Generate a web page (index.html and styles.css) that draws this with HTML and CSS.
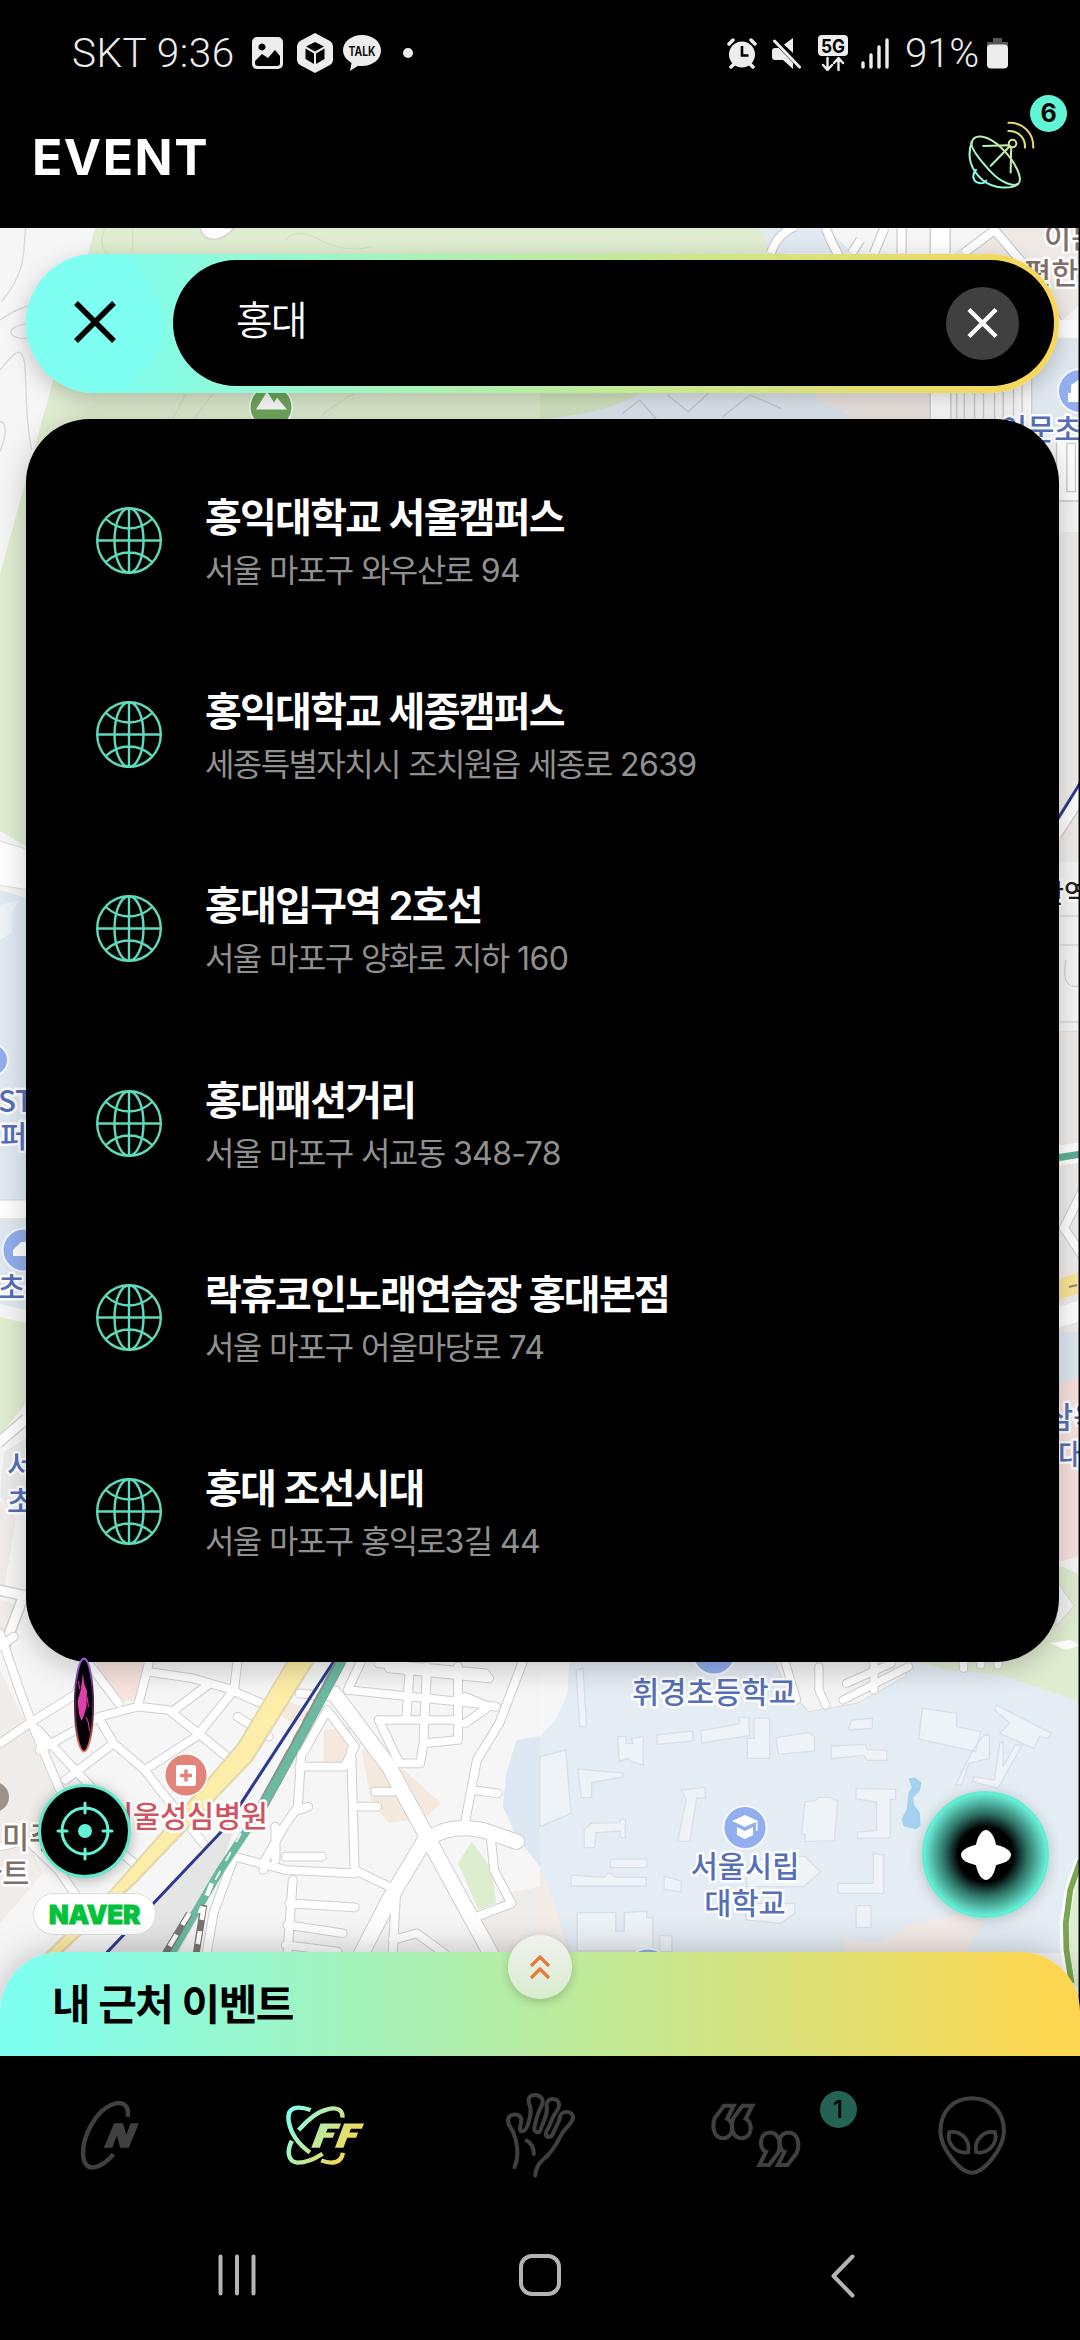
FILE: index.html
```html
<!DOCTYPE html>
<html lang="ko">
<head>
<meta charset="utf-8">
<title>EVENT</title>
<link rel="stylesheet" href="styles.css">
</head>
<body>
<div class="phone">
  <div class="status">
    <div class="status-side">
      <span class="status-time">SKT 9:36</span>
      <svg class="ic-image" viewBox="0 0 31 32"><path fill="#ededed" fill-rule="evenodd" d="M5 0h21a5 5 0 0 1 5 5v22a5 5 0 0 1-5 5H5a5 5 0 0 1-5-5V5a5 5 0 0 1 5-5zM3 24v2a3 3 0 0 0 3 3h19a3 3 0 0 0 3-3v-7l-5-6-7 8-6-4zM10 6.500a3.500 3.500 0 1 0 .01 0z"/></svg>
      <svg class="ic-cube" viewBox="0 0 36 40"><path fill="#ededed" d="M18 0l15 8q3 2 3 5v14q0 3-3 5l-15 8-15-8q-3-2-3-5V13q0-3 3-5z"/><path fill="#000" d="M18 9l9 4.500-9 5-9-5zM8.500 15.500l8.500 5V31l-8.500-5zM27.500 15.500l-8.500 5V31l8.500-5z"/></svg>
      <svg class="ic-talk" viewBox="0 0 38 36"><path fill="#ededed" d="M19 0C30 0 38 7 38 15.500S30 31 19 31q-3 0-4-.3L7 36l1.500-8Q0 23 0 15.500C0 7 8 0 19 0z"/><text x="19" y="20.500" text-anchor="middle" font-size="12.500" font-weight="700" fill="#111" font-family="Inter,sans-serif" textLength="27" lengthAdjust="spacingAndGlyphs">TALK</text></svg>
      <i class="status-dot"></i>
    </div>
    <div class="status-side status-right">
      <svg class="ic-alarm" viewBox="0 0 30 31"><circle cx="15" cy="16.500" r="13" fill="#ededed"/><path stroke="#ededed" stroke-width="3.500" stroke-linecap="round" d="M2 6l4-4M28 6l-4-4M4 29l4-4M26 29l-4-4"/><path fill="none" stroke="#000" stroke-width="2.600" d="M15 8v9.500h6.500"/></svg>
      <svg class="ic-mute" viewBox="0 0 29 31"><path fill="#ededed" d="M21 0v15L12 6.500zM0 13q0-3 3-3h4l14 13.500V31l-10-9H3q-3 0-3-3z"/><path stroke="#000" stroke-width="6" d="M5 4l24 25"/><path stroke="#ededed" stroke-width="3" stroke-linecap="round" d="M2.500 3L27.500 29"/></svg>
      <svg class="ic-5g" viewBox="0 0 30 36"><rect width="30" height="21" rx="4" fill="#ededed"/><text x="15" y="17.500" text-anchor="middle" font-size="19" font-weight="700" fill="#000" font-family="Inter,sans-serif" textLength="24" lengthAdjust="spacingAndGlyphs">5G</text><path fill="none" stroke="#ededed" stroke-width="2.400" stroke-linecap="round" stroke-linejoin="round" d="M9.500 23v11M5 30l4.500 5 4.500-5M20.500 35V24M16 28l4.500-5 4.500 5"/></svg>
      <svg class="ic-signal" viewBox="0 0 28 31"><path stroke="#ededed" stroke-width="3.400" stroke-linecap="round" d="M2 25v4M10 17v12M18 9v20M26 2v27"/></svg>
      <span class="status-pct">91%</span>
      <svg class="ic-battery" viewBox="0 0 21 31"><path fill="#555" d="M6 0h9v4h6v5H0V4h6z"/><rect y="6.500" width="21" height="24" rx="4" fill="#ededed"/></svg>
    </div>
  </div>

  <header class="header">
    <h1>EVENT</h1>
    <div class="dish">
      <svg viewBox="1240 360 200 205" preserveAspectRatio="none">
        <defs><linearGradient id="dishG" gradientUnits="userSpaceOnUse" x1="1250" y1="540" x2="1430" y2="370"><stop offset="0" stop-color="#7ffff0"/><stop offset=".55" stop-color="#c4eaa4"/><stop offset="1" stop-color="#f9d050"/></linearGradient></defs>
        <g fill="none" stroke="url(#dishG)" stroke-width="6" stroke-linecap="round">
          <path d="M1254 425C1262 400 1300 404 1340 443S1404 536 1388 550C1376 558 1340 548 1310 515S1247 440 1254 425z"/>
          <path d="M1254 425C1238 470 1252 510 1285 538S1370 566 1388 550"/>
          <path d="M1266 508c-14 18-8 38 12 40q14 0 18-8"/>
          <circle cx="1372" cy="430" r="11"/>
          <path d="M1361 435l-74 2.500M1364 438l-55 58M1368 442l-1.500 74M1360 393c28-2 50 20 48 49M1360 368c42-2 74 32 72 74"/>
        </g>
      </svg>
      <b class="badge badge-top">6</b>
    </div>
  </header>

  <main class="stage">
    <svg class="map" viewBox="0 228 1080 1828" preserveAspectRatio="none">
      <rect y="228" width="1080" height="1828" fill="#f6f6f6"/>
      <!-- hills and top strip -->
      <path fill="#dfedd0" d="M95 228h665l30 30v130l-180 20-80 40H220L26 480v366l-26-15V574l34-124z"/>
      <g transform="translate(0 220) scale(.34435 .33333)" fill="none" stroke="#d8d8d8" stroke-width="4">
        <path d="M75 24c-10 60 10 120-70 220M0 300q50-35 90-45M85 310c-80 10-60 50-5 45M0 450c40-50 60-80 72-20 5 60 0 160 20 260M0 605c20 0 20 40 0 90"/>
        <path stroke="#d2e2c6" d="M305 24q-20 50 5 76M385 24v76M830 60q30-40 100 0t150 20M540 520l-40 80M620 520l-60 80M930 590q60-50 100-70"/>
        <path fill="#fff" stroke="#cfcfcf" d="M580 20c10 50 60 50 100 4z"/>
      </g>
      <g transform="translate(540 220) scale(.34435 .33333)">
        <path fill="#e1eaf2" d="M640 24h190l80 76H670zM0 600l300-80h520l70 60v20z"/>
        <path fill="#d6e8c5" d="M0 520h290q-90 60-290 78z"/>
        <path fill="#efe9e5" d="M800 520h340v80H890v-25l-80-30zM1200 100l140-80h230v230l-60 60z"/>
        <path fill="#dfe7ef" d="M1430 355h140v290h-140z"/>
        <g fill="none" stroke="#c9c9c9" stroke-width="30"><path d="M670 100q20-60 70-80M830 24q20 60 60 120M905 100l25-40M970 100l30-76M1050 24v76M1230 100l90-70 90 110 100 180h60"/></g>
        <g fill="none" stroke="#fff" stroke-width="23"><path d="M670 100q20-60 70-80M830 24q20 60 60 120M905 100l25-40M970 100l30-76M1050 24v76M1230 100l90-70 90 110 100 180h60"/></g>
        <path fill="#fff" d="M1133 24h58v76h-58zM1133 520h60v80h-60zM1505 300h63v52h-63z"/>
        <path stroke="#ccc" stroke-width="4" fill="none" d="M1133 24v76M1191 24v76M1133 520v80M1193 520v80M1210 520v80M1232 520v80M1262 520v80M1288 520v80M1320 500v100M1345 500v100M1375 490v110M1400 480v120M1428 470v130M240 580l50-40 50 60M370 525l60 50 60-55M530 590l80-65 90 40"/>
        <path stroke="#ccc" stroke-width="4" fill="#fff" d="M1500 665h70v178h-70z"/><path stroke="#ccc" stroke-width="4" fill="none" d="M1530 670h25v145h-25z"/>
      </g>
      <rect x="1059" y="532" width="21" height="330" fill="#f0ece9"/>
      <g transform="translate(146 1)"><circle cx="125" cy="406" r="22" fill="#fff"/><circle cx="125" cy="406" r="20.500" fill="#72a95c"/><path fill="#fff" d="M110 408.500l11-18 7 11 3-5 10 12z"/></g>
      <!-- left edge -->
      <path fill="#fff" stroke="#ddd" d="M-4 840l34 10v40l-34-5z"/>
      <path fill="#e1eaf3" d="M0 890l26 8v304H0z"/><path fill="#eef3f7" d="M0 905l20-5-8 12v20l-12 8z"/>
      <path fill="#fff" stroke="#d5d5d5" d="M-2 1200h30v19H-2z"/>
      <path fill="#dfe8f2" d="M0 1220h26v90l-26-6z"/>
      <path fill="#dfedd0" d="M0 1317l26 6v80l-26 32z"/>
      <path fill="#ebebeb" d="M4 1452l22-14v76H8l-8-20z"/>
      <path fill="#f1ece9" d="M0 1500l16 18-12 72H0zM0 1600l14 4-10 40H0z"/>
      <path fill="none" stroke="#d0d0d0" stroke-width="12" d="M-2 1443l28-24M-2 1590l28 6M22 1600L4 1648"/><path fill="none" stroke="#fff" stroke-width="9" d="M-2 1443l28-24M-2 1590l28 6M22 1600L4 1648"/>
      <!-- right edge -->
      <path fill="none" stroke="#d0d0d0" stroke-width="15" d="M1055 834l30-46"/><path fill="none" stroke="#fff" stroke-width="12" d="M1055 834l30-46"/>
      <path stroke="#2b3a8f" stroke-width="3" d="M1056 822l26-42"/>
      <path fill="none" stroke="#ccc" d="M1060 916h20M1060 945h20M1066 960q-6 30 14 26M1059 1022h21M1059 1032h21"/>
      <path fill="#f0ece9" d="M1059 1032h21v300h-21z"/>
      <path stroke="#fff" stroke-width="20" d="M1056 1156l26-4"/><path stroke="#5fae98" stroke-width="7" d="M1056 1158l26-4"/>
      <path fill="none" stroke="#ccc" stroke-width="10" d="M1084 1188l-20 40 20 30"/><path fill="none" stroke="#fff" stroke-width="8" d="M1084 1188l-20 40 20 30"/>
      <path stroke="#fbe59a" stroke-width="20" d="M1056 1290l26-8"/><path stroke="#888" stroke-width="2" d="M1069 1287l8-2"/>
      <path stroke="#fff" stroke-width="20" d="M1056 1318l26-8"/>
      <path fill="#dfe8f2" d="M1059 1332h21v60h-21z"/><path fill="#f8e2de" d="M1059 1384l21-8v180l-21 6z"/>
      <path fill="#dfedd0" d="M1059 1565l21 10v100h-50z"/><path fill="#f3f3f3" stroke="#d5d5d5" d="M1056 1580l18 26-18 20z"/>

      <!-- south-west blocks, rail and streets -->
      <g transform="translate(0 1640) scale(.34435 .33333)">
        <path fill="#f0ece9" d="M0 90l75 160 90 220-10 90-60 80 30 60L0 850z"/>
        <path fill="#f9e4df" d="M280 60h160l-40 120-55 5-60-90z"/>
        <path fill="#f5e8dd" d="M1050 330h60l170 160-40 40-110 20-50-60zM830 180l90 40-20 60-80-50zM940 270l80-10-20 110h-60z"/>
        <path fill="#dceecd" d="M1370 605l60 85 10 100-50 20-60-140z"/>
        <path fill="#dde8f3" d="M1500 300l68-12v392l-68-90-40-90 10-100z"/>
        <path fill="#f0ece9" d="M1390 830l100-75 78-15v200h-140z"/>
        <path fill="#e5e5e5" d="M640 575l60-60-90 250-90 170H320z"/>
        <defs><g id="streets" fill="none" stroke-linejoin="round" stroke-linecap="round">
          <path d="M0-20l60 180 40 110 70 170 30 60M0 310l100-70 140-90M0 20L40-10M115 330l175-100 110-30 25-100 25-110M250 60l-30 110M250 60l95 130M400 200l90 10 110 90 70 60M290 240l40 70 90 80 60 80 50 60 60 80M190 420l140-110M110 270l180 200M430 95l130 20 100 30 110 50M690 60l-10 90-110 140-150 100M610 130L500 215M690 230l90 60M0 620l80-20 90 90 60 90M300 590l100 90"/>
          <path d="M1050 60l-40 90 370 40 60 10M1100 70l310 30 10 15-290-30M1190 80l-10 160M1240 80l-10 220M1330 80v220M1100 240h220M1100 240l60 130h60l10-60 100-10M1350 170l70 30-70 50M1520 60l-70 190-65 110-35 190M1370 450l75 10M1090 455h50M1045 500h50M1425 590l10 100 50 100-100 40"/>
          <path d="M1020 330l10 370-200-10-150-40-60 170-20 120M875 340l-10 160-40 60-60 110v20M870 380h130l30-60-80-110-70 130M870 510l25-10M800 560v100M830 650h105M850 720l-15 220M840 790l190 12M835 855l160 25M830 915l150 20M1150 760l-10 190M1030 690l100 50M1140 900l70-20 80 60M960 170l-90-10"/>
        </g>
        <g id="avenues" fill="none" stroke-linecap="round"><path d="M970 160l160 220 110 210 100 190 90 170M1240 590l-110 190-90 180M1240 600q60-50 160-30l100 35"/></g></defs>
        <use href="#streets" stroke="#cfcfcf" stroke-width="29"/><use href="#avenues" stroke="#cfcfcf" stroke-width="49"/>
        <use href="#streets" stroke="#fff" stroke-width="23"/><use href="#avenues" stroke="#fff" stroke-width="43"/>
        <path fill="#e3d9ae" d="M835 60h82L735 362 400 725 160 960h-50l210-210L550 480 690 310z"/>
        <path fill="#fceea8" d="M840 60h70L728 360 395 720 150 960h-30l204-206L556 482 696 312z"/>
        <path fill="none" stroke="#2b3a8f" stroke-width="9" d="M972 60L700 490l-60 88L310 938"/>
        <path fill="none" stroke="#86968f" stroke-width="32" d="M992 60L830 370 750 520"/>
        <path fill="none" stroke="#6cb9a2" stroke-width="24" d="M995 60L833 370 750 520 640 690 495 945"/>
        <path fill="none" stroke="#fff" stroke-width="5" stroke-dasharray="30 34" d="M935 130L820 350M700 580l-80 150"/>
        <path fill="none" stroke="#7a7672" stroke-width="20" d="M550 820l-70 120M592 795l-22 145"/><path fill="none" stroke="#fff" stroke-width="13" stroke-dasharray="40 34" d="M550 820l-70 120M592 800l-22 140M615 730l-35 90"/>
      </g>
      <!-- university campus -->
      <g transform="translate(540 1640) scale(.34435 .33333)">
        <path fill="#e4ecf4" d="M0 60h1568v880H0z"/>
        <path fill="#f7f7f7" d="M0 60h85l-5 100-35 80-45 50z"/>
        <path fill="#f3ebe6" d="M0 690l40 90 40 160H0zM880 895l100 15 100-60 140-25 65 20-50 95H880z"/>
        <path fill="#dfedd0" d="M1080 60l280 6L1480 0h88v185l-228-80-160-15z"/>
        <path fill="#f4f4f4" stroke="#ddd" stroke-width="3" d="M680 60h400l-20 50-140 80-140 25-70-80z"/>
        <path fill="none" stroke="#cfcfcf" stroke-width="27" stroke-linecap="round" d="M710 60l35 120M810 80v70l20 45M880 180l190-100M890 130l130-60M970 60v90M1230 60v25M1280 60v15M1330 60v15"/>
        <path fill="none" stroke="#fff" stroke-width="21" stroke-linecap="round" d="M710 60l35 120M810 80v70l20 45M880 180l190-100M890 130l130-60M970 60v90M1230 60v25M1280 60v15M1330 60v15"/>
        <path fill="#fff" d="M1480 10l60-10 28 15-40 15z"/>
        <g fill="#eef3f8" stroke="#d9dfe6" stroke-width="4">
          <path d="M0 350l75-20 15 190-90 40zM105 90l20-5 10 175h-20zM225 290h25v20h20l-5-15 35-5v85l-35-10-10-10-25 10zM338 285l105-12 2 30-105 10zM468 272l110-20v-20h28l3 55-140 22zM622 235h45v120h-65v-60h20zM685 293l95-15 17 10v45l-105 10zM905 240l60-5v30l-70 5zM845 318l100-5 5 15 57 3v30h-57l-10-15-95 10zM1110 205l100 15v40l70 15-15 60-165-38zM1325 195l160 85-10 15-25-5-15 35-100-45 30-30-45-40zM1290 285h15v70l-60 15-20 65h-18l50-105zM1345 305v75l35-65h20l-70 130-75-20 5-15 60 10 15-110zM110 387l130 12v12l-90 17v45h-30zM410 450l70-8v32h-25l-20 130h-35l25-125zM128 570l20-20 85-2v-10h15v55h-15v-20l-70 5-5 45h-30zM205 657h105v26H205zM90 705l95 7 15-15 20 15h88v26H90zM360 708l50 15v33l-50-8zM770 485l30-3 10-10h30l25 10-10 120-85 3v-20l-10-5zM918 445l115 3v30h-16v115l-95 3v-20l55-5v-85l-60-10zM968 640l30 5v115H865v-30h103zM918 797h43v65h-43zM108 818h112v55h25v-55l65-5v20h18v100H108zM348 887h35v48h-35zM660 650h110l45 45-50 45H600v-60zM590 790h150v30l-40 30-100-10z"/>
        </g>
        <path fill="#a3d1ef" d="M1070 415l20-2 18 15-5 25-20 20 5 25 15 20 2 40-15 10-35-10-5-20 15-30 5-50 10-15z"/>
        <path fill="#dfedd0" d="M1568 660l-40 130-5 150 20 100h25z"/>
        <path fill="none" stroke="#fff" stroke-width="28" d="M1568 660l-30 90-15 100 2 80 15 100"/><path fill="none" stroke="#7ba653" stroke-width="17" d="M1570 660l-30 90-13 100 2 80 15 100"/>
      </g>
      <!-- place markers -->
      <circle cx="186" cy="1775" r="22" fill="#fff"/><circle cx="186" cy="1775" r="20.500" fill="#e18479"/><rect x="176" y="1765" width="20" height="21" rx="2" fill="#fff"/><path stroke="#e18479" stroke-width="3.500" d="M180 1775.500h12M186 1769.500v12"/>
      <circle cx="-6" cy="1797" r="15" fill="#9b938b"/>
      <g fill="#92aeee" stroke="#f4f8fd" stroke-width="2"><circle cx="745" cy="1827.500" r="21.500"/><circle cx="714" cy="1653" r="21.500"/><circle cx="648" cy="1970" r="21.500"/><circle cx="1080" cy="391" r="22"/><circle cx="-8" cy="1060" r="16"/><circle cx="24" cy="1250" r="21.500"/></g>
      <path fill="#fff" d="M732 1821l13-6 13 6-13 6zM737 1827l8 4 8-4v8l-8 4-8-4zM756 1821h1.500v10H756zM1068 402v-9h3v-8l9-6v23zM13 1256v-6l8-8h6v14z"/>
      <g class="label label-school">
        <text x="632" y="1703" textLength="164">휘경초등학교</text><text x="745" y="1877" text-anchor="middle">서울시립</text><text x="745" y="1914" text-anchor="middle">대학교</text>
        <text x="1000" y="440">이문초</text><text x="-2" y="1112">ST</text><text x="0" y="1147">퍼</text><text x="-2" y="1298">초등</text><text x="7" y="1476">서울</text><text x="7" y="1512">초등</text><text x="1046" y="1428">삼육</text><text x="1058" y="1465">대학</text>
      </g>
      <g class="label label-place"><text x="1044" y="248">이문</text><text x="1024" y="284">편한</text><text x="2" y="1848">미주</text><text x="-25" y="1884">파트</text></g>
      <text class="label label-station" x="1040" y="903">안역</text>
      <text class="label label-hospital" x="106" y="1827" textLength="162">서울성심병원</text>
      <path stroke="#000" stroke-width="1.500" d="M1079.300 228v1828"/>
    </svg>

    <div class="search">
      <button class="close"><svg viewBox="0 0 42 42"><path d="M2 2l38 38M40 2L2 40"/></svg></button>
      <div class="field"><span>홍대</span><button class="clear"><svg viewBox="0 0 32 32"><path d="M2 2l28 28M30 2L2 30"/></svg></button></div>
    </div>

    <svg class="defs"><defs><g id="globe" fill="none" stroke="#5edabb" stroke-width="2.400"><ellipse cx="33" cy="33.500" rx="31.800" ry="32.300"/><ellipse cx="33" cy="33.500" rx="14.500" ry="32.300"/><path d="M33 1v65M1 33.500h64M10 12q10 9.500 23 9.500t23-9.500M10 55q10-9.500 23-9.500t23 9.500"/></g></defs></svg>
    <ul class="results">
      <li><svg viewBox="0 0 66 67"><use href="#globe"/></svg><div><h2>홍익대학교 서울캠퍼스</h2><p>서울 마포구 와우산로 <span>94</span></p></div></li>
      <li><svg viewBox="0 0 66 67"><use href="#globe"/></svg><div><h2>홍익대학교 세종캠퍼스</h2><p>세종특별자치시 조치원읍 세종로 <span>2639</span></p></div></li>
      <li><svg viewBox="0 0 66 67"><use href="#globe"/></svg><div><h2>홍대입구역 2호선</h2><p>서울 마포구 양화로 지하 <span>160</span></p></div></li>
      <li><svg viewBox="0 0 66 67"><use href="#globe"/></svg><div><h2>홍대패션거리</h2><p>서울 마포구 서교동 <span>348-78</span></p></div></li>
      <li><svg viewBox="0 0 66 67"><use href="#globe"/></svg><div><h2>락휴코인노래연습장 홍대본점</h2><p>서울 마포구 어울마당로 <span>74</span></p></div></li>
      <li><svg viewBox="0 0 66 67"><use href="#globe"/></svg><div><h2>홍대 조선시대</h2><p>서울 마포구 홍익로<span>3</span>길 <span>44</span></p></div></li>
    </ul>

    <svg class="coin" viewBox="0 0 20 96"><defs><linearGradient id="coinG" x2="0" y2="1"><stop offset="0" stop-color="#a568e8"/><stop offset=".4" stop-color="#3c1440"/><stop offset=".7" stop-color="#7a2c40"/><stop offset="1" stop-color="#f07a62"/></linearGradient></defs><ellipse cx="10" cy="48" rx="9" ry="46.500" fill="#040008" stroke="url(#coinG)" stroke-width="2"/><path fill="#dc3fae" d="M9 16l1 10 3 8-.5 16-3 10-2 4-2.500-7-1.500-13 3-10z"/><path fill="none" stroke="#c23a94" stroke-width="1.200" d="M5.500 32l-1-8M13 40l1.500 10M12 60l2.500 6 1 8"/></svg>
    <button class="locate"><svg viewBox="0 0 58 60"><g fill="none" stroke="#64f2d6" stroke-width="3"><circle cx="29" cy="30" r="23"/><path stroke-linecap="round" d="M29 2v10M29 48v10M2 30h9M47 30h9"/></g><circle cx="29" cy="30" r="7" fill="#64f2d6"/></svg></button>
    <div class="naver">NAVER</div>
    <button class="fab"><svg viewBox="0 0 50 50"><ellipse cx="25" cy="25" rx="11" ry="25"/><ellipse cx="25" cy="25" rx="25" ry="11"/><circle cx="25" cy="25" r="14.500"/></svg></button>

    <section class="sheet"><h3>내 근처 이벤트</h3><button class="toggle"><svg viewBox="0 0 22 26"><path d="M2 12l9-9 9 9M2 24l9-9 9 9"/></svg></button></section>
  </main>

  <nav class="tabs">
    <svg class="tab-n" viewBox="232 152 176 208" preserveAspectRatio="none"><path fill="none" stroke="#404040" stroke-width="13" d="M371 202C378 170 360 154 330 164 275 184 240 262 241 312 243 376 297 354 330 313"/><path fill="#404040" d="M302 294l30-73h26l10 34 12-34h25l-30 73h-25l-10-36-13 36z"/></svg>
    <svg class="tab-ff" viewBox="826 165 234 184" preserveAspectRatio="none"><defs><linearGradient id="ffG" gradientUnits="userSpaceOnUse" x1="830" y1="190" x2="1020" y2="310"><stop offset="0" stop-color="#7ffff0"/><stop offset=".5" stop-color="#bceaa0"/><stop offset="1" stop-color="#fbd64f"/></linearGradient></defs><g fill="none" stroke="url(#ffG)" stroke-width="13"><path d="M901 180C860 165 830 172 837 215 843 250 865 283 899 308M866 241C890 212 920 185 950 178 980 170 995 180 994 203M846 273C830 305 835 336 862 339 888 340 912 328 936 312M932 332C960 344 992 342 995 309"/></g><path fill="url(#ffG)" d="M903 294l27-73h60l-6 16h-33l-5 11h26l-6 16h-27l-11 30zM972 294l27-73h58l-6 16h-32l-5 11h26l-6 16h-26l-11 30z"/></svg>
    <svg class="tab-hand" viewBox="40 35 220 265" preserveAspectRatio="none"><path fill="none" stroke="#404040" stroke-width="12" stroke-linecap="round" stroke-linejoin="round" d="M75 261C90 225 84 190 70 155 62 140 50 128 57 112 65 98 90 100 95 115 97 130 88 140 92 150 98 158 110 150 114 136 122 112 128 90 119 72 112 50 125 43 138 44 155 45 164 58 157 75 150 88 140 115 135 140 131 156 148 162 153 150 160 125 178 100 171 75 172 50 206 50 209 72 210 90 196 95 189 115 182 135 172 148 169 160 170 174 184 174 191 160 200 138 210 125 212 108 218 88 252 92 251 112 250 130 228 140 215 165 200 195 182 222 160 240 145 252 139 265 137 287M111 181q22 12 22 41"/></svg>
    <div class="quotes"><svg viewBox="497 160 262 194" preserveAspectRatio="none"><g fill="none" stroke="#404040" stroke-width="12"><path id="q" d="M535 168h28l-19 39c20 8 22 55-10 58-30 0-35-35-26-60z"/><use href="#q" x="54"/><g transform="rotate(180 627.500 256.500)"><use href="#q"/><use href="#q" x="54"/></g></g></svg><b class="badge badge-tab">1</b></div>
    <svg class="tab-alien" viewBox="1152 136 204 242" preserveAspectRatio="none"><g fill="none" stroke="#404040" stroke-width="12"><path d="M1254 146c58 0 93 42 93 98 0 50-58 124-93 124s-92-74-92-124c0-56 34-98 92-98z"/><path stroke-width="11" d="M1188 247c30-6 62 20 55 60-34 6-64-24-55-60zM1321 247c-30-6-62 20-55 60 34 6 64-24 55-60z"/></g></svg>
  </nav>
  <div class="sysnav">
    <svg width="40" height="42" viewBox="0 0 40 42"><path d="M3.500 2.500v37M20 2.500v37M36.500 2.500v37"/></svg>
    <svg class="home" width="42" height="42" viewBox="0 0 42 42"><rect x="2" y="2" width="38" height="38" rx="11"/></svg>
    <svg width="24" height="44" viewBox="0 0 24 44"><path d="M21.500 2.500L2.500 22l19 19.500"/></svg>
  </div>
</div>
</body>
</html>
```
FILE: styles.css
```css
* { box-sizing: border-box; }
body { margin: 0; background: #000; font-family: Inter, "Noto Sans CJK KR", sans-serif; }
h1, h2, h3, p, ul { margin: 0; padding: 0; list-style: none; }
button { border: 0; padding: 0; background: none; display: flex; align-items: center; justify-content: center; }
svg { display: block; flex: none; }
.phone { width: 1080px; height: 2340px; display: flex; flex-direction: column; overflow: hidden; background: #000; }

.status { height: 106px; display: flex; justify-content: space-between; align-items: center; padding: 0 72px 0 72px; color: #ededed; font-family: Roboto, sans-serif; }
.status-side { display: flex; align-items: center; }
.status-time { width: 180px; font-size: 40.500px; font-weight: 350; letter-spacing: .5px; white-space: nowrap; }
.ic-image { width: 31px; height: 32px; margin-right: 14px; }
.ic-cube { width: 36px; height: 40px; margin-right: 10px; }
.ic-talk { width: 38px; height: 36px; margin-right: 22px; }
.status-dot { width: 10px; height: 10px; border-radius: 50%; background: #ededed; }
.ic-alarm { width: 30px; height: 31px; margin-right: 15px; }
.ic-mute { width: 29px; height: 31px; margin-right: 17px; }
.ic-5g { width: 30px; height: 36px; margin-right: 13px; }
.ic-signal { width: 28px; height: 31px; margin-right: 16px; }
.status-pct { width: 82px; font-size: 40.500px; font-weight: 350; letter-spacing: -.3px; }
.ic-battery { width: 21px; height: 31px; }

.header { height: 122px; padding: 0 44px 22px 32px; display: flex; align-items: center; justify-content: space-between; }
.header h1 { color: #fff; font-size: 50px; font-weight: 650; letter-spacing: 1.500px; line-height: 60px; padding-top: 2px; }
.dish { position: relative; width: 69px; height: 69px; margin-top: -4px; }
.dish svg { width: 69px; height: 69px; }
.badge { position: absolute; width: 37px; height: 37px; border-radius: 50%; display: flex; align-items: center; justify-content: center; font-weight: 700; font-size: 25px; color: #000; }
.badge-top { left: 63px; top: -25px; background: #5ff5d5; }

.stage { position: relative; height: 1828px; padding: 26px 21px 0 26px; overflow: hidden; display: flex; flex-direction: column; }
.map { position: absolute; left: 0; top: 0; width: 1080px; height: 1828px; }
.label { font-family: "Noto Sans CJK KR", sans-serif; font-size: 29.500px; font-weight: 500; paint-order: stroke; stroke: #fff; stroke-width: 5px; stroke-linejoin: round; }
.label-school { fill: #5570b8; }
.label-place { fill: #7f7168; }
.label-station { fill: #222; font-size: 26px; }
.label-hospital { fill: #d0535f; }
.defs { position: absolute; width: 0; height: 0; }

.search { position: relative; height: 139px; flex: none; border-radius: 70px; display: flex; align-items: center; padding-right: 5px; background: linear-gradient(90deg, #7ffff0 8%, #b9eca0 50%, #fad655 100%); box-shadow: 0 6px 22px rgba(0,0,0,.22); }
.close { width: 137px; height: 139px; border-radius: 50%; background: #7ffff2; margin-right: 10px; padding-bottom: 3px; }
.close svg { width: 42px; height: 44px; fill: none; stroke: #000; stroke-width: 5.500; }
.field { flex: 1; height: 126px; border-radius: 63px; background: #000; color: #fff; display: flex; align-items: center; justify-content: space-between; padding: 0 35px 0 63px; margin-top: -1px; }
.field span { font-size: 40px; font-weight: 350; letter-spacing: -2px; font-family: "Noto Sans CJK KR", sans-serif; margin-top: -10px; line-height: 60px; }
.clear { width: 73px; height: 73px; border-radius: 50%; background: #404040; }
.clear svg { width: 31px; height: 32px; fill: none; stroke: #fff; stroke-width: 4.500; }

.results { position: relative; flex: none; height: 1243px; margin-top: 26px; border-radius: 64px; background: #000; padding-top: 24px; box-shadow: 0 6px 30px rgba(0,0,0,.22); }
.results li { height: 194.300px; display: flex; align-items: center; padding-left: 70px; }
.results li > svg { width: 66px; height: 67px; margin-right: 43px; }
.results li > div { padding-top: 5px; }
.results h2 { color: #fff; font-size: 40px; line-height: 56px; font-weight: 600; letter-spacing: -1.750px; white-space: nowrap; }
.results p { color: #909090; font-size: 32px; line-height: 50px; font-weight: 400; letter-spacing: -1.600px; word-spacing: 1px; white-space: nowrap; }
.results p span { letter-spacing: -.6px; }

.coin { position: absolute; left: 74px; top: 1429px; width: 20px; height: 96px; }
.locate { position: absolute; left: 38px; top: 1556px; width: 93px; height: 94px; border-radius: 50%; background: #000; border: 3px solid #5fe8cc; box-shadow: 0 2px 14px rgba(0,0,0,.3); }
.locate svg { width: 58px; height: 60px; }
.naver { position: absolute; left: 33px; top: 1665px; width: 123px; height: 42px; border-radius: 21px; background: #fff; border: 1px solid #ddd; color: #03c23c; font-size: 26px; font-weight: 900; -webkit-text-stroke: .8px #03c23c; letter-spacing: -.2px; display: flex; align-items: center; justify-content: center; }
.fab { position: absolute; left: 922px; top: 1563px; width: 127px; height: 127px; border-radius: 50%; border: 4px solid #62ecd2; background: radial-gradient(circle closest-side, #000 0 46%, #2f7468 70%, #62dcc6 98%); box-shadow: 0 2px 14px rgba(0,0,0,.2); }
.fab svg { width: 50px; height: 50px; fill: #fff; }

.sheet { position: absolute; left: 0; bottom: 0; width: 1080px; height: 104px; border-radius: 60px 60px 0 0; background: linear-gradient(90deg, #7ffff0 2%, #b9eca0 50%, #fcd650 97%); box-shadow: 0 0 36px rgba(0,0,0,.25); padding: 2px 0 0 52px; display: flex; align-items: center; }
.sheet h3 { font-size: 42px; font-weight: 600; letter-spacing: -1.500px; color: #000; line-height: 60px; }
.toggle { position: absolute; left: 508px; top: -17px; width: 64px; height: 64px; border-radius: 50%; background: linear-gradient(#f0f1ee, #d9ecce); box-shadow: 0 3px 10px rgba(0,0,0,.2); }
.toggle svg { width: 22px; height: 26px; fill: none; stroke: #e8783a; stroke-width: 3.200; }

.tabs { height: 160px; flex: none; display: flex; align-items: flex-start; padding-left: 80px; }
.tab-n { width: 60px; height: 70px; margin: 44px 145px 0 0; }
.tab-ff { width: 80px; height: 61px; margin: 49px 138px 0 0; }
.tab-hand { width: 73px; height: 88px; margin: 36px 135px 0 0; }
.quotes { position: relative; width: 90px; height: 65px; margin: 47px 136px 0 0; }
.quotes svg { width: 90px; height: 65px; }
.badge-tab { left: 108.500px; top: -12.500px; background: #246354; font-size: 24px; font-weight: 500; }
.tab-alien { width: 70px; height: 81px; margin-top: 39px; }

.sysnav { flex: 1; display: flex; justify-content: space-between; align-items: flex-start; padding: 38px 225px 0 217px; }
.sysnav svg { fill: none; stroke: #b4b4b4; stroke-width: 4; stroke-linecap: round; stroke-linejoin: round; }
.sysnav .home { margin-right: 8px; }
```
